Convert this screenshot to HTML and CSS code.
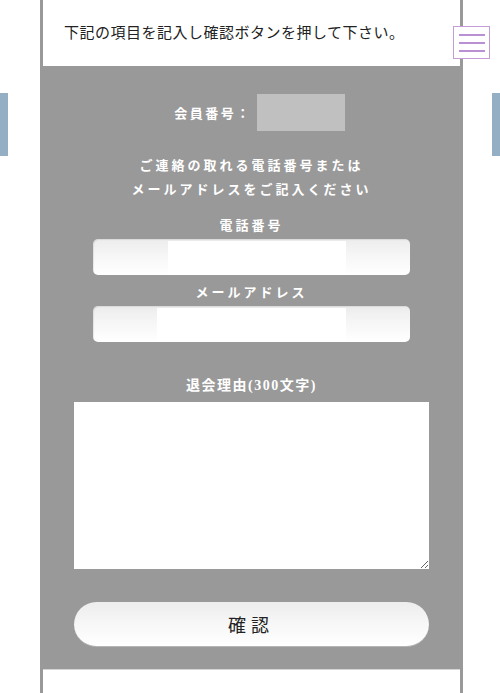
FILE: index.html
```html
<!DOCTYPE html>
<html lang="ja">
<head>
<meta charset="utf-8">
<title>退会フォーム</title>
<link rel="stylesheet" href="styles.css">
</head>
<body>
<div class="page">
  <div class="side side-left"><span class="side-bar"></span></div>
  <main class="column">
    <header class="intro">
      <p class="intro-text">下記の項目を記入し確認ボタンを押して下さい。</p>
    </header>
    <form class="form">
      <div class="member-row">
        <span class="member-label">会員番号：</span>
        <span class="member-box"></span>
      </div>
      <p class="notice">ご連絡の取れる電話番号または<br>メールアドレスをご記入ください</p>
      <div class="field">
        <label class="field-label">電話番号</label>
        <div class="input-shell"><span class="input-core input-core-tel"></span></div>
      </div>
      <div class="field field-mail">
        <label class="field-label">メールアドレス</label>
        <div class="input-shell"><span class="input-core input-core-mail"></span></div>
      </div>
      <div class="reason">
        <label class="reason-label">退会理由(300文字)</label>
        <textarea class="reason-box"></textarea>
      </div>
      <button type="button" class="submit">確認</button>
    </form>
    <footer class="bottom"></footer>
  </main>
  <div class="side side-right"><span class="side-bar"></span></div>
  <button type="button" class="menu" aria-label="menu">
    <span class="menu-line"></span>
    <span class="menu-line"></span>
    <span class="menu-line"></span>
  </button>
</div>
</body>
</html>
```

FILE: styles.css
```css
* { box-sizing: border-box; }
html, body {
  margin: 0;
  padding: 0;
  background: #fff;
}
body {
  width: 500px;
  height: 693px;
  overflow: hidden;
  font-family: "Liberation Serif", "Noto Sans CJK JP", serif;
}
.page {
  position: relative;
  display: grid;
  grid-template-columns: 40px 423px 1fr;
  height: 693px;
}
.side {
  display: flex;
  padding-top: 93px;
}
.side-right { justify-content: flex-end; }
.side-bar {
  display: block;
  width: 8px;
  height: 63px;
  background: #94afc3;
}
.column {
  display: flex;
  flex-direction: column;
  background: #999;
  height: 693px;
}
.intro {
  height: 66px;
  margin: 0 3px;
  background: #fff;
  display: flex;
  align-items: center;
  padding-left: 21px;
}
.intro-text {
  margin: 0;
  font-size: 15px;
  line-height: 20px;
  color: #222;
  letter-spacing: 0.5px;
}
.form {
  display: flex;
  flex-direction: column;
  align-items: center;
  padding: 28px 0 22px;
  color: #fff;
}
.member-row {
  display: flex;
  align-items: center;
  gap: 5px;
  padding-left: 16px;
}
.member-label {
  font-size: 13px;
  font-weight: bold;
  letter-spacing: 2.5px;
}
.member-box {
  display: block;
  width: 88px;
  height: 37px;
  background: #c0c0c0;
}
.notice {
  margin: 23px 0 0;
  font-size: 13px;
  font-weight: bold;
  line-height: 24px;
  letter-spacing: 3px;
  text-align: center;
}
.field {
  display: flex;
  flex-direction: column;
  align-items: center;
  margin-top: 12px;
}
.field-mail { margin-top: 6px; }
.field-label {
  font-size: 13px;
  font-weight: bold;
  line-height: 24px;
  letter-spacing: 3px;
}
.input-shell {
  margin-top: 1px;
  width: 317px;
  height: 36px;
  border-radius: 5px;
  background: linear-gradient(to bottom, #ececec 0%, #f6f6f6 45%, #fff 100%);
  box-shadow: inset 1px 1px 1px rgba(0,0,0,0.08);
  display: flex;
  align-items: stretch;
  padding: 2px 0 0;
}
.input-core {
  display: block;
  background: #fff;
}
.input-core-tel { margin-left: 75px; width: 178px; }
.input-core-mail { margin-left: 64px; width: 189px; }
.reason {
  display: flex;
  flex-direction: column;
  align-items: center;
  margin-top: 32px;
}
.reason-label {
  font-size: 14px;
  font-weight: bold;
  line-height: 24px;
  letter-spacing: 1.5px;
}
.reason-box {
  display: block;
  margin-top: 4px;
  width: 355px;
  height: 167px;
  border: none;
  background: #fff;
  padding: 4px;
}
.submit {
  margin-top: 33px;
  width: 355px;
  height: 45px;
  border: none;
  border-bottom: 1px solid #b5b5b5;
  border-radius: 23px;
  background: linear-gradient(to bottom, #ededed 0%, #f7f7f7 50%, #fff 100%);
  font-family: "Liberation Serif", "Noto Sans CJK JP", serif;
  font-size: 18px;
  letter-spacing: 5px;
  padding-left: 5px;
  color: #222;
}
.bottom {
  flex: 1;
  margin: 0 3px;
  background: #fff;
  border-top: 1px solid #d5d5d5;
}
.menu {
  position: absolute;
  left: 453px;
  top: 26px;
  width: 37px;
  height: 33px;
  border: 1.5px solid #c49dd6;
  background: #fff;
  padding: 0;
  display: flex;
  flex-direction: column;
  align-items: center;
  justify-content: center;
  gap: 6px;
}
.menu-line {
  display: block;
  width: 26px;
  height: 2px;
  background: #bb90d2;
}
```
